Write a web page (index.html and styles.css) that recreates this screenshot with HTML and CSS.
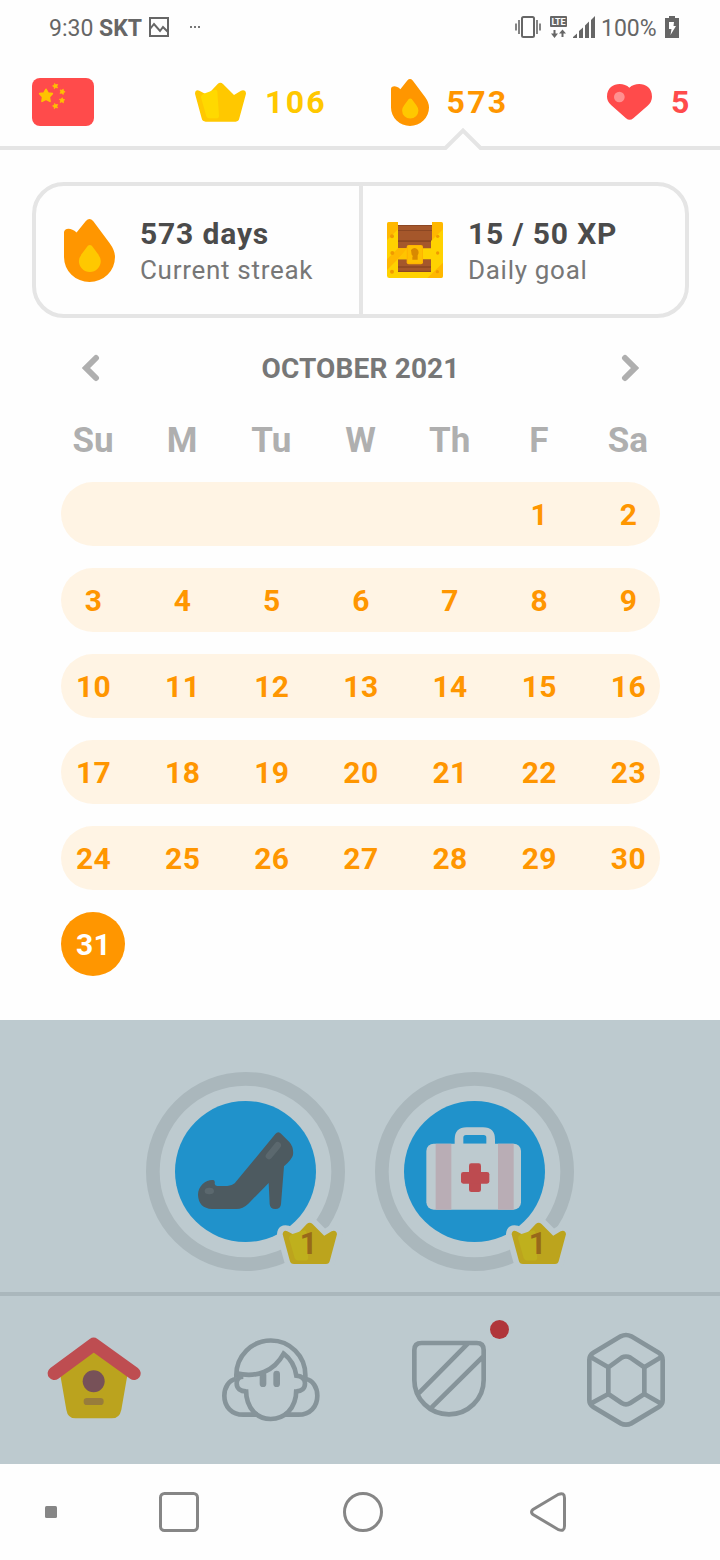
FILE: index.html
```html
<!DOCTYPE html>
<html lang="en">
<head>
  <meta charset="UTF-8">
  <meta name="viewport" content="width=device-width, initial-scale=1.0">
  <title>Streak</title>
  <link rel="stylesheet" href="styles.css">
</head>
<body>

  <!-- Shared shapes -->
  <svg class="shapes" width="0" height="0">
    <symbol id="flame" viewBox="0 0 154 190">
      <path fill="#ff9600" d="M0 40 C0 28 20 23 38 41 L66 6 Q77 -6 88 6 L138 73 Q154 95 154 115 A77 75 0 0 1 0 115Z"/>
      <path fill="#ffc800" d="M72 81 Q78 76 84 81 L102 105 Q111 117 111 127 A33 33 0 0 1 45 127 Q45 117 54 105Z"/>
    </symbol>
    <path id="crown-shape" d="M0 34 Q1 21 13 25 L37 38 L68 5 Q76 -3 84 5 L117 38 L138 25 Q152 21 153 34 L133 108 Q131 118 122 118 L32 118 Q22 118 20 108Z"/>
    <path id="crown-shine" d="M18 45 Q18 38 26 34 L57 23 Q66 20 67 28 L72 100 Q72 108 64 108 L42 108 Q36 108 34 102Z"/>
    <path id="star" d="M0 -19 L6 -8 L19 -6 L10 4 L12 17 L0 11 L-12 17 L-10 4 L-19 -6 L-6 -8Z" fill="#ffc200" stroke="#ffc200" stroke-width="5" stroke-linejoin="round"/>
  </svg>

  <!-- Status bar -->
  <div class="status-bar">
    <span class="time">9:30</span>
    <span class="carrier">SKT</span>
    <svg class="photo" width="20" height="20" viewBox="0 0 20 20" fill="none" stroke="#666" stroke-width="2">
      <rect x="1" y="1" width="18" height="18"/>
      <path d="M1 12 L5 7 L11 14 L14 10 L19 15"/>
    </svg>
    <svg class="dots" width="11" height="2" viewBox="0 0 11 2" fill="#777">
      <rect width="2" height="2"/><rect x="4" width="2" height="2"/><rect x="8" width="2" height="2"/>
    </svg>
    <div class="status-right">
      <svg width="26" height="22" viewBox="0 0 26 22" fill="none" stroke="#666" stroke-width="2">
        <rect x="7" y="1" width="12" height="20" rx="1.5"/>
        <path stroke-width="1.6" d="M1 7.500 V14.500 M4 4 V18 M22 4 V18 M25 7.500 V14.500"/>
      </svg>
      <svg class="lte" width="17" height="22" viewBox="0 0 17 22" fill="#666">
        <rect width="17" height="11" rx="1"/>
        <text x="8.500" y="9" text-anchor="middle" textLength="14">LTE</text>
        <path d="M3.500 14 H5.500 V17.500 H8 L4.500 22 L1 17.500 H3.500Z M11.500 21 V17.500 H9 L12.500 13.500 L16 17.500 H13.500 V21Z"/>
      </svg>
      <svg class="signal" width="22" height="22" viewBox="0 0 22 22" fill="#666">
        <path d="M0 22 V21 L4 17.500 V22Z M6 22 V15 L10 11.500 V22Z M12 22 V9.500 L16 5.500 V22Z M18 22 V4 L22 0 V22Z"/>
      </svg>
      <span class="percent">100%</span>
      <svg width="14" height="22" viewBox="0 0 14 22">
        <path fill="#666" d="M0 2 H4 V0 H10 V2 H14 V22 H0Z"/>
        <path fill="#fff" d="M4 6 H9 L8.500 10 H11 L5.500 19 L6.500 13 H4Z"/>
      </svg>
    </div>
  </div>

  <!-- Header -->
  <header>
    <div class="stat">
      <svg width="62" height="48" viewBox="0 0 186 144">
        <rect width="186" height="144" rx="24" fill="#ff4b4b"/>
        <use href="#star" transform="translate(42 53)"/>
        <use href="#star" transform="translate(70 24) rotate(-15) scale(.42)"/>
        <use href="#star" transform="translate(91 41) rotate(20) scale(.42)"/>
        <use href="#star" transform="translate(90 67) rotate(5) scale(.42)"/>
        <use href="#star" transform="translate(70 84) rotate(-15) scale(.42)"/>
      </svg>
    </div>
    <div class="stat gold">
      <svg width="51" height="40" viewBox="0 0 153 118">
        <use href="#crown-shape" fill="#ffc800"/>
        <use href="#crown-shine" fill="#ffd900"/>
      </svg>
      <span>106</span>
    </div>
    <div class="stat orange">
      <svg width="38" height="47"><use href="#flame"/></svg>
      <span>573</span>
    </div>
    <div class="stat red">
      <svg width="45" height="36" viewBox="0 0 135 108">
        <path fill="#ff4b4b" d="M67 11 C88 -8 135 -3 135 38 Q135 53 122 65 L79 103 Q68 112 57 103 L13 64 Q0 52 0 38 C0 -3 47 -8 67 11Z"/>
        <circle cx="37" cy="39" r="16" fill="#ff9090"/>
      </svg>
      <span>5</span>
    </div>
  </header>
  <svg class="notch-line" width="720" height="24" viewBox="0 0 720 24" fill="none" stroke="#e5e5e5" stroke-width="4">
    <path d="M0 22 H445.500 L463 4.500 L480.500 22 H720"/>
  </svg>

  <!-- Streak and goal -->
  <section class="summary">
    <div class="summary-item">
      <svg width="51" height="63"><use href="#flame"/></svg>
      <div>
        <h2>573 days</h2>
        <p class="streak-label">Current streak</p>
      </div>
    </div>
    <div class="summary-item goal">
      <svg width="56" height="56" viewBox="111 156 168 168">
        <rect x="111" y="156" width="168" height="168" rx="7" fill="#ffd200"/>
        <path fill="#fefefe" d="M144 155 H246 V170 H144Z"/>
        <path fill="#a5572b" d="M144 167 H246 V210 L243 213 V235 H144Z M144 268 H243 V305 H144Z"/>
        <path fill="#8c4723" d="M144 165 H246 V168 H144Z M144 180 H246 V183 H144Z M144 211 H243 V216 H144Z M144 289 H243 V293 H144Z M144 302 H243 V306 H144Z"/>
        <path fill="#ffb800" d="M111 163 Q111 156 118 156 H144 V178 L111 210Z M246 156 H272 Q279 156 279 163 V178 L246 210Z M111 268 L144 235 H176 L111 300Z M279 278 V317 Q279 324 272 324 H232Z"/>
        <path fill="#ffc400" d="M171 235 V268 H144Z"/>
        <g fill="#f09a00">
          <circle cx="126" cy="199" r="6"/><circle cx="127" cy="249" r="6"/><circle cx="126" cy="305" r="6"/>
          <circle cx="263" cy="199" r="5"/><circle cx="263" cy="249" r="5"/><circle cx="262" cy="305" r="5"/>
        </g>
        <rect x="170" y="225" width="49" height="58" rx="6" fill="#ffb400"/>
        <rect x="174" y="228" width="42" height="50" rx="4" fill="#ffbf00"/>
        <path fill="#d98900" d="M183 240 Q194 228 204 240 Q208 249 203 256 V269 H187 V262 Q190 257 185 254Z"/>
      </svg>
      <div>
        <h2>15 / 50 XP</h2>
        <p class="goal-label">Daily goal</p>
      </div>
    </div>
  </section>

  <!-- Calendar -->
  <section class="calendar">
    <div class="calendar-header">
      <svg width="18" height="28" viewBox="0 0 18 28"><path d="M14 4 L4 14 L14 24"/></svg>
      <h3>OCTOBER 2021</h3>
      <svg width="18" height="28" viewBox="0 0 18 28"><path d="M4 4 L14 14 L4 24"/></svg>
    </div>
    <div class="weekdays">
      <span>Su</span><span>M</span><span>Tu</span><span>W</span><span>Th</span><span>F</span><span>Sa</span>
    </div>
    <div class="week"><span></span><span></span><span></span><span></span><span></span><span>1</span><span>2</span></div>
    <div class="week"><span>3</span><span>4</span><span>5</span><span>6</span><span>7</span><span>8</span><span>9</span></div>
    <div class="week"><span>10</span><span>11</span><span>12</span><span>13</span><span>14</span><span>15</span><span>16</span></div>
    <div class="week"><span>17</span><span>18</span><span>19</span><span>20</span><span>21</span><span>22</span><span>23</span></div>
    <div class="week"><span>24</span><span>25</span><span>26</span><span>27</span><span>28</span><span>29</span><span>30</span></div>
    <div class="week today"><span>31</span></div>
  </section>

  <!-- Lessons under the dimmed overlay -->
  <section class="lessons">
    <svg width="220" height="220" viewBox="0 0 660 660">
      <circle cx="316.500" cy="334.500" r="278" fill="none" stroke="#aab7bc" stroke-width="41"/>
      <circle cx="316.500" cy="334.500" r="211.500" fill="#2092cb"/>
      <path fill="#4d5a60" d="M174 405 C174 375 200 358 220 360 Q226 362 224 372 Q226 378 232 378 L262 378 Q275 378 284 370 L406 222 Q415 212 424 222 L448 246 Q462 262 459 285 Q456 298 432 319 L423 432 Q422 447 406 447 Q390 447 389 432 L386 369 L325 431 Q308 447 290 447 L216 447 Q176 445 174 405Z"/>
      <ellipse cx="208" cy="393" rx="14" ry="10" fill="#5b686e"/>
      <path d="M387 288 L413 256" stroke="#5b686e" stroke-width="20" stroke-linecap="round"/>
      <g transform="translate(428 487) scale(1.065 1.06)">
        <use href="#crown-shape" class="crown-edge"/>
        <use href="#crown-shape" fill="#bca41d"/>
        <use href="#crown-shine" fill="#bfb01d"/>
      </g>
      <text class="level" x="506" y="582" text-anchor="middle">1</text>
    </svg>
    <svg width="220" height="220" viewBox="0 0 660 660">
      <circle cx="316.500" cy="334.500" r="278" fill="none" stroke="#aab7bc" stroke-width="41"/>
      <circle cx="316.500" cy="334.500" r="211.500" fill="#2092cb"/>
      <g transform="translate(-12 0)">
        <path fill="#bdcacf" fill-rule="evenodd" d="M269 255 V238 Q269 202 305 202 H354 Q390 202 390 238 V255Z M295 251 H364 V233 Q364 225 356 225 H303 Q295 225 295 233Z"/>
        <rect x="184" y="251" width="284" height="198" rx="22" fill="#bdcacf"/>
        <path fill="#b9adb5" d="M212 251 H259 V449 H212Z M399 251 H446 V449 H399Z"/>
        <rect x="312" y="310" width="36" height="86" rx="7" fill="#bd4b50"/>
        <rect x="288" y="336" width="85" height="35" rx="7" fill="#bd4b50"/>
      </g>
      <g transform="translate(428 487) scale(1.065 1.06)">
        <use href="#crown-shape" class="crown-edge"/>
        <use href="#crown-shape" fill="#bca41d"/>
        <use href="#crown-shine" fill="#bfb01d"/>
      </g>
      <text class="level" x="506" y="582" text-anchor="middle">1</text>
    </svg>
  </section>

  <!-- Tabs -->
  <nav class="tabs">
    <svg class="house" width="94" height="82" viewBox="52 80 282 246">
      <path fill="#bba31e" d="M92 195 L192 115 L293 195 L275 298 Q270 324 246 324 L138 324 Q114 324 110 298Z"/>
      <path fill="none" stroke="#be4d51" stroke-width="40" stroke-linecap="round" stroke-linejoin="round" d="M74 189 L192 102 L313 189"/>
      <circle cx="192" cy="213" r="33" fill="#775158"/>
      <rect x="162" y="263" width="60" height="21" rx="10" fill="#987c3b"/>
    </svg>
    <svg class="line-icon" width="98" height="84" viewBox="576 84 294 252">
      <path d="M619 203 V195 A103.500 103.500 0 0 1 826 195 V205"/>
      <path d="M619 190 C680 204 732 185 761 131 Q793 155 799 197 C818 199 825 208 825 220 C825 236 815 244 799 244"/>
      <path d="M640 200 C625 200 620 210 620 220 C620 236 632 244 648 244"/>
      <path d="M648 238 C648 300 685 327 722 327 C760 327 799 300 799 238"/>
      <path d="M618 207 C597 210 583 232 583 257 C583 290 605 314 640 314 L684 314"/>
      <path d="M827 207 C848 210 862 232 862 257 C862 290 840 314 805 314 L762 314"/>
      <path stroke-width="20" stroke-linecap="round" d="M699 195 V221 M740 192 V221"/>
    </svg>
    <div class="tab-league">
      <svg class="line-icon" width="74" height="78" viewBox="96 120 222 234">
        <path d="M125 129 H290 Q311 129 311 150 V240 A104 103 0 0 1 103 240 V150 Q103 129 125 129Z M264 130 L115 281 M309 170 L152 325"/>
      </svg>
      <i class="badge"></i>
    </div>
    <svg class="line-icon gem" width="80" height="96" viewBox="618 96 240 288">
      <path d="M722 109 Q738 101 754 109 L836 158 Q848 166 848 180 V300 Q848 313 836 321 L754 370 Q738 378 722 370 L640 321 Q628 313 628 300 V180 Q628 166 640 158Z"/>
      <path d="M725 173 Q738 166 751 173 L793 202 V282 L751 309 Q738 317 725 309 L685 282 V202Z"/>
      <path d="M632 171 L685 202 M844 171 L793 202 M632 311 L685 282 M844 311 L793 282"/>
    </svg>
  </nav>

  <!-- System navigation -->
  <div class="system-nav">
    <svg width="12" height="12" viewBox="0 0 12 12"><rect width="12" height="12" rx="1.500" fill="#868686"/></svg>
    <svg width="40" height="40" viewBox="0 0 40 40"><rect x="1.500" y="1.500" width="37" height="37" rx="4"/></svg>
    <svg width="40" height="40" viewBox="0 0 40 40"><circle cx="20" cy="20" r="18.500"/></svg>
    <svg width="36" height="40" viewBox="0 0 36 40"><path d="M28.500 2.300 Q34.500 0 34.500 6 V34 Q34.500 40 28.500 37.700 L3 22.500 Q0 20 3 17.500Z"/></svg>
  </div>

</body>
</html>
```

FILE: styles.css
```css
* {
  box-sizing: border-box;
}

body {
  font-family: Roboto, "Liberation Sans", sans-serif;
  background-color: #fefefe;
  margin: 0;
  width: 720px;
}

h2, h3, p {
  margin: 0;
}

svg {
  display: block;
  flex: none;
}

.shapes {
  position: absolute;
}

/* Status bar */
.status-bar {
  display: flex;
  align-items: center;
  height: 56px;
  padding: 0 41px 2px 49px;
  font-size: 23px;
  color: #666;
}

.time {
  width: 50px;
  padding-top: 2px;
}

.carrier {
  width: 50px;
  padding-top: 2px;
  font-weight: bold;
}

.dots {
  margin-left: 21px;
}

.status-right {
  display: flex;
  align-items: center;
  margin-left: auto;
}

.lte {
  margin-left: 9px;
}

.lte text {
  font-size: 9px;
  font-weight: bold;
  fill: #fff;
}

.signal {
  margin-left: 6px;
}

.percent {
  width: 64px;
  margin-left: 6px;
  padding-top: 2px;
}

/* Header */
header {
  display: grid;
  grid-template-columns: 163px 195.500px 216.500px auto;
  align-items: center;
  height: 70px;
  padding: 22px 0 0 32px;
}

.stat {
  display: flex;
  align-items: center;
  height: 48px;
  gap: 19px;
  font-size: 32px;
  font-weight: bold;
  letter-spacing: 2.3px;
}

.gold { color: #ffc800; }
.orange { color: #ff9600; gap: 18px; }
.red { color: #ff4b4b; }

.notch-line {
  height: 24px;
}

/* Streak and goal */
.summary {
  display: flex;
  width: 657px;
  height: 136px;
  margin: 32px 0 0 32px;
  border: 4px solid #e5e5e5;
  border-radius: 32px;
}

.summary-item {
  display: flex;
  flex: none;
  align-items: center;
  gap: 25px;
  width: 327px;
  padding-left: 28px;
  border-right: 4px solid #e5e5e5;
}

.summary-item:first-child {
  width: 327px;
}

.summary .goal {
  width: 322px;
  padding-left: 24px;
  border-right: none;
}

.summary h2 {
  padding-top: 2px;
  font-size: 30px;
  line-height: 37px;
  letter-spacing: 0.85px;
  color: #4b4b4b;
}

.summary p {
  font-size: 26px;
  line-height: 36px;
  letter-spacing: 0.7px;
  color: #777;
}

/* Calendar */
.calendar {
  height: 702px;
  padding: 30px 60px 0 61px;
}

.calendar-header {
  display: flex;
  justify-content: space-between;
  align-items: center;
  height: 40px;
  padding: 0 21px;
}

.calendar-header path {
  fill: none;
  stroke: #afafaf;
  stroke-width: 6;
  stroke-linecap: round;
}

.calendar-header h3 {
  font-size: 28px;
  letter-spacing: 0.15px;
  color: #777;
}

.weekdays {
  display: flex;
  justify-content: space-between;
  align-items: center;
  height: 64px;
  margin: 20px 0 10px;
  font-size: 35px;
  font-weight: bold;
  color: #afafaf;
}

.weekdays span,
.week span {
  width: 64px;
  text-align: center;
}

.week {
  display: flex;
  justify-content: space-between;
  height: 64px;
  margin-bottom: 22px;
  border-radius: 32px;
  background-color: #fff4e4;
  font-size: 30px;
  font-weight: bold;
  line-height: 66px;
  letter-spacing: 0.4px;
  color: #ff9600;
}

.week span {
  padding-left: 1px;
}

.today {
  width: 64px;
  background-color: #ff9600;
  color: #fff;
}

/* Lessons */
.lessons {
  display: flex;
  gap: 9px;
  height: 276px;
  padding: 40px 0 0 140px;
  background-color: #bdcacf;
  border-bottom: 4px solid #aab7bc;
}

.crown-edge {
  fill: #bdcacf;
  stroke: #bdcacf;
  stroke-width: 32;
  stroke-linejoin: round;
}

.level {
  font-size: 92px;
  font-weight: bold;
  fill: #98691a;
}

/* Tabs */
.tabs {
  display: flex;
  align-items: center;
  height: 168px;
  padding-left: 47px;
  background-color: #bdcacf;
}

.house {
  margin-bottom: 5px;
}

.line-icon {
  fill: none;
  stroke: #86949a;
  stroke-width: 14;
}

.tabs > .line-icon {
  margin-left: 81px;
}

.tab-league {
  position: relative;
  margin: 0 0 2px 92px;
}

.badge {
  position: absolute;
  top: -20px;
  left: 78px;
  width: 19px;
  height: 19px;
  border-radius: 50%;
  background-color: #b0353a;
}

.tabs > .gem {
  margin-left: 100px;
}

/* System navigation */
.system-nav {
  display: flex;
  align-items: center;
  height: 96px;
  padding-left: 45px;
}

.system-nav svg {
  fill: none;
  stroke: #868686;
  stroke-width: 3;
}

.system-nav svg:first-child {
  stroke: none;
}

.system-nav svg:nth-child(2) {
  margin-left: 102px;
}

.system-nav svg:nth-child(3) {
  margin-left: 144px;
}

.system-nav svg:nth-child(4) {
  margin-left: 147px;
}
```
